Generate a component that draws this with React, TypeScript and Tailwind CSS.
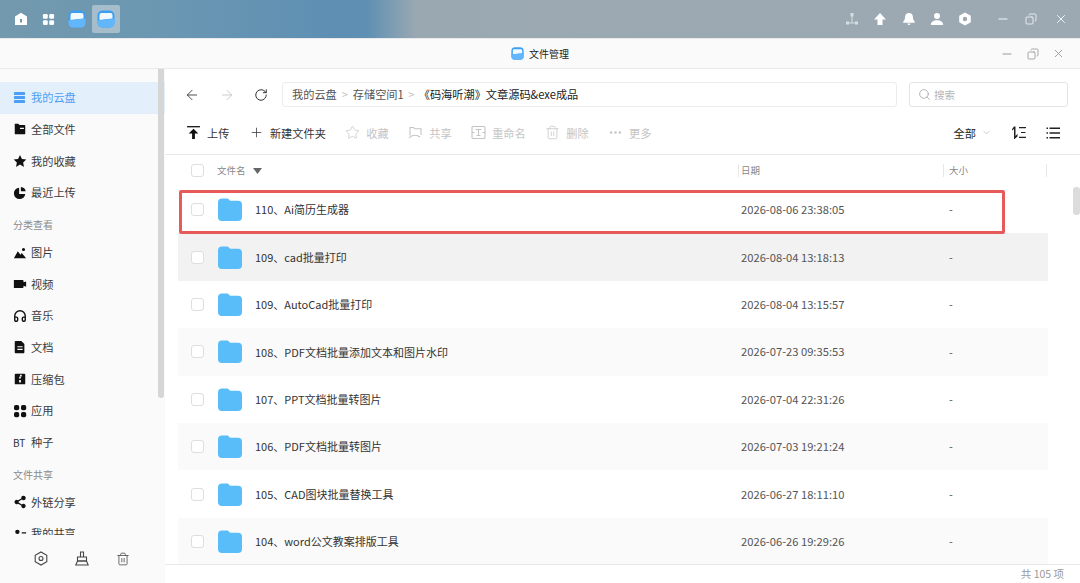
import React from "react";
import {
  ArrowLeft, ArrowRight, RotateCw, Search, Plus, Star, Trash2, Ellipsis, ChevronDown, Minus, X, Copy,
  Headphones,
} from "lucide-react";

const font = { fontFamily: '"Noto Sans CJK SC","Liberation Sans",sans-serif' };

function Dot({ d, size = 16, className = "" }: { d: string; size?: number; className?: string }) {
  return (
    <svg width={size} height={size} viewBox="0 0 16 16" className={className} fill="currentColor" fillRule="evenodd">
      <path d={d} />
    </svg>
  );
}

const ICONS: Record<string, React.ReactNode> = {
  cloud: (
    <svg width="13" height="13" viewBox="0 0 14 14" fill="#4d9ff5">
      <rect x="1" y="1" width="12" height="3.4" rx="1" />
      <rect x="1" y="5.3" width="12" height="3.4" rx="1" />
      <rect x="1" y="9.6" width="12" height="3.4" rx="1" />
    </svg>
  ),
  all: <Dot size={14} d="M2 2h4l1.500 1.500H13a1 1 0 0 1 1 1V13a1 1 0 0 1-1 1H3a1 1 0 0 1-1-1zM8 6.500v1.500h4.500V6.500z" />,
  star: <Dot size={14} d="M8 1l2.200 4.600 5 .7-3.600 3.500.9 5L8 12l-4.500 2.800.9-5L.8 6.300l5-.7z" />,
  recent: <Dot size={14} d="M7 2a6.500 6.500 0 1 0 7 7H7zM9 1v5h5.500A6 6 0 0 0 9 1z" />,
  image: <Dot size={14} d="M1 14l4.500-8 3 4 1.500-2 5 6zM12 2.200a1.800 1.800 0 1 1 0 3.600 1.800 1.800 0 0 1 0-3.600z" />,
  video: <Dot size={14} d="M1 3.500h10a1 1 0 0 1 1 1v1.500l3-1v6l-3-1v1.500a1 1 0 0 1-1 1H1z" />,
  music: <Headphones size={14} strokeWidth={2.4} />,
  doc: <Dot size={14} d="M3 1h6.500L13 4.500V14a1 1 0 0 1-1 1H3a1 1 0 0 1-1-1V2a1 1 0 0 1 1-1zM5 7v1.300h6V7zm0 3v1.300h6V10z" />,
  zip: <Dot size={14} d="M3 2h10a1 1 0 0 1 1 1v10a1 1 0 0 1-1 1H3a1 1 0 0 1-1-1V3a1 1 0 0 1 1-1zM8 3v2h2V3zM7 5.500v2h2v-2zM7 9v3h2V9z" />,
  app: (
    <svg width="14" height="14" viewBox="0 0 14 14" fill="currentColor">
      <rect x="1" y="1" width="5.200" height="5.200" rx="1.800" />
      <rect x="8" y="1" width="5.200" height="5.200" rx="1.800" />
      <rect x="1" y="8" width="5.200" height="5.200" rx="1.800" />
      <rect x="8" y="8" width="5.200" height="5.200" rx="1.800" />
    </svg>
  ),
  share: <Dot size={14} d="M12 1a2.500 2.500 0 1 1-1.800 4.200L6.400 7.300a2.500 2.500 0 0 1 0 1.400l3.800 2.100a2.500 2.500 0 1 1-.7 1.300L5.700 10a2.500 2.500 0 1 1 0-4l3.800-2.100A2.500 2.500 0 0 1 12 1z" />,
  mine: <Dot size={14} d="M5 3a2.500 2.500 0 1 1 0 5 2.500 2.500 0 0 1 0-5zM1 13c0-2.500 1.500-4 4-4s4 1.500 4 4zM10 6h5v1.300h-5zm0 3.500h5v1.300h-5z" />,
};

function NavItem({ icon, label, active, bt }: { icon?: string; label: string; active?: boolean; bt?: boolean }) {
  return (
    <div className={`flex h-[31.600px] items-center pl-[13px] text-[11.200px] ${active ? "bg-[#e4effc] text-[#4d9ff5]" : "text-[#3a3a3a]"}`}>
      <span className="flex w-[18px] shrink-0 items-center text-[#111]">
        {bt ? <span className="text-[10px] text-[#333]">BT</span> : icon ? ICONS[icon] : null}
      </span>
      <span>{label}</span>
    </div>
  );
}

function SectionLabel({ label }: { label: string }) {
  return <div className="flex h-[28.400px] items-center pl-[13px] pt-[4px] text-[10px] text-[#8a8a8a]">{label}</div>;
}

function Folder({ className = "" }: { className?: string }) {
  return (
    <svg width="24" height="23" viewBox="0 0 24 23" className={className}>
      <path d="M4 .5h5c1 0 1.500.5 2.200 1.500.4.6.8.8 1.500.8H20a4 4 0 0 1 4 4V19a4 4 0 0 1-4 4H4a4 4 0 0 1-4-4V4.500a4 4 0 0 1 4-4z" fill="#58bdf8" />
    </svg>
  );
}

function AppFolderIcon({ size = 18 }: { size?: number }) {
  return (
    <svg width={size} height={size} viewBox="0 0 18 18">
      <rect x="0.500" y="0.500" width="17" height="17" rx="5" fill="#3a9ff2" />
      <path d="M2.500 5a2 2 0 0 1 2-2h9a2 2 0 0 1 2 2v3.500L2.500 10z" fill="#f0f9ff" />
      <path d="M.5 10.500 17.500 8.500V13a4.500 4.500 0 0 1-4.500 4.500H5A4.500 4.500 0 0 1 .5 13z" fill="#62b6fb" />
    </svg>
  );
}

function CheckBox() {
  return <span className="block h-[13px] w-[13px] rounded-[3px] border border-[#dedede] bg-white" />;
}

const rows = [
  ["110、Ai简历生成器", "2026-08-06 23:38:05"],
  ["109、cad批量打印", "2026-08-04 13:18:13"],
  ["109、AutoCad批量打印", "2026-08-04 13:15:57"],
  ["108、PDF文档批量添加文本和图片水印", "2026-07-23 09:35:53"],
  ["107、PPT文档批量转图片", "2026-07-04 22:31:26"],
  ["106、PDF文档批量转图片", "2026-07-03 19:21:24"],
  ["105、CAD图块批量替换工具", "2026-06-27 18:11:10"],
  ["104、word公文教案排版工具", "2026-06-26 19:29:26"],
];

function ToolBtn({ icon, label, off }: { icon: React.ReactNode; label: string; off?: boolean }) {
  return (
    <div className={`flex items-center gap-[6px] text-[11.200px] ${off ? "text-[#c4c4c4]" : "text-[#333]"}`}>
      {icon}
      <span>{label}</span>
    </div>
  );
}

export default function App() {
  return (
    <div style={font} className="flex h-[583px] w-[1080px] flex-col overflow-hidden bg-white">
      {/* Desktop top bar */}
      <div className="flex h-[38px] shrink-0 items-center justify-between bg-[linear-gradient(90deg,#7399ad_0%,#6b97b2_15%,#5e8fb3_31%,#5f90b3_34%,#9aa8b2_38.500%,#9ca9b3_100%)] pl-[14px] pr-[12px]">
        <div className="flex items-center">
          <svg width="14" height="14" viewBox="0 0 14 14" className="mr-[14px]" fill="#fff" fillRule="evenodd">
            <path d="M7 .8 13 4.600V13H1V4.600zM6 7v3.500h2V7z" />
          </svg>
          <svg width="13" height="13" viewBox="0 0 14 14" className="mr-[13px]" fill="#fff">
            <rect x="1" y="1" width="5.200" height="5.200" rx="1.300" />
            <rect x="7.800" y="1" width="5.200" height="5.200" rx="1.300" />
            <rect x="1" y="7.800" width="5.200" height="5.200" rx="1.300" />
            <rect x="7.800" y="7.800" width="5.200" height="5.200" rx="1.300" />
          </svg>
          <span className="mr-[6px] flex"><AppFolderIcon /></span>
          <span className="flex h-[28px] w-[28px] items-center justify-center rounded-[2px] bg-[#a6bdcb]"><AppFolderIcon /></span>
        </div>
        <div className="flex items-center text-white">
          <svg width="14" height="14" viewBox="0 0 14 14" className="mr-[14px]" fill="#d5dde2">
            <rect x="5.500" y="1" width="3" height="3.500" />
            <rect x="1" y="9.500" width="3" height="3" />
            <rect x="10" y="9.500" width="3" height="3" />
            <path d="M6.500 4h1v6.500H10v1H4v-1h2.500z" />
          </svg>
          <svg width="14" height="14" viewBox="0 0 14 14" className="mr-[15px]" fill="#fff">
            <path d="M7 1 13 7.500H9.500V13h-5V7.500H1z" />
          </svg>
          <svg width="14" height="14" viewBox="0 0 14 14" className="mr-[14px]" fill="#fff">
            <path d="M7 1c2.800 0 4 2 4 4.500 0 2 .8 3 1.800 4.200v1H1.200v-1C2.200 8.500 3 7.500 3 5.500 3 3 4.200 1 7 1zM5.500 11.500h3a1.500 1.500 0 0 1-3 0z" />
          </svg>
          <svg width="14" height="14" viewBox="0 0 14 14" className="mr-[14px]" fill="#fff">
            <circle cx="7" cy="4" r="3" />
            <path d="M.8 13c0-3 2.500-4.800 6.200-4.800s6.200 1.800 6.200 4.800z" />
          </svg>
          <svg width="14" height="14" viewBox="0 0 14 14" className="mr-[24px]" fill="#fff" fillRule="evenodd">
            <path d="M7 .5 12.800 3.800v6.400L7 13.500 1.200 10.200V3.800zM7 4.800a2.200 2.200 0 1 0 0 4.400 2.200 2.200 0 0 0 0-4.400z" />
          </svg>
          <Minus size={14} strokeWidth={1.500} className="mr-[15px]" />
          <Copy size={12} strokeWidth={1.500} className="mr-[17px] -scale-x-100" />
          <X size={14} strokeWidth={1.500} />
        </div>
      </div>

      {/* Window title bar */}
      <div className="grid h-[31px] shrink-0 grid-cols-[1fr_auto_1fr] items-center border-y border-[#e9e9e9] bg-[#fafafa] pr-[15px] pl-[15px]">
        <div />
        <div className="flex items-center gap-[5px] text-[10px] text-[#222]">
          <AppFolderIcon size={13} />
          <span>文件管理</span>
        </div>
        <div className="flex items-center justify-end gap-[13px] text-[#8f8f8f]">
          <Minus size={14} strokeWidth={1.500} />
          <Copy size={12} strokeWidth={1.500} className="-scale-x-100" />
          <X size={13} strokeWidth={1.500} />
        </div>
      </div>

      {/* Body */}
      <div className="flex min-h-0 flex-1">
        {/* Sidebar */}
        <aside className="relative flex w-[165px] shrink-0 flex-col bg-[#fafafa]">
          <div className="min-h-0 flex-1 overflow-hidden pt-[13px]">
            <NavItem icon="cloud" label="我的云盘" active />
            <NavItem icon="all" label="全部文件" />
            <NavItem icon="star" label="我的收藏" />
            <NavItem icon="recent" label="最近上传" />
            <SectionLabel label="分类查看" />
            <NavItem icon="image" label="图片" />
            <NavItem icon="video" label="视频" />
            <NavItem icon="music" label="音乐" />
            <NavItem icon="doc" label="文档" />
            <NavItem icon="zip" label="压缩包" />
            <NavItem icon="app" label="应用" />
            <NavItem bt label="种子" />
            <SectionLabel label="文件共享" />
            <NavItem icon="share" label="外链分享" />
            <NavItem icon="mine" label="我的共享" />
          </div>
          <div className="flex h-[48px] shrink-0 items-center gap-[27px] bg-[#fafafa] pb-[1px] pl-[34px] text-[#444]">
            <svg width="14" height="15" viewBox="0 0 14 15" fill="none" stroke="currentColor" strokeWidth="1.100">
              <path d="M7 1 12.800 4.200v6.600L7 14 1.200 10.800V4.200z" />
              <circle cx="7" cy="7.500" r="2" />
            </svg>
            <svg width="14" height="15" viewBox="0 0 14 15" fill="none" stroke="currentColor" strokeWidth="1.100">
              <path d="M5.500 6V1h3v5" />
              <path d="M2.500 6h9v4h-9z" />
              <path d="M.8 14l1.700-4h9l1.700 4z" />
            </svg>
            <Trash2 size={14} strokeWidth={1.300} />
          </div>
          <div className="absolute right-[1px] top-0 h-[329px] w-[6px] rounded-b-[3px] bg-[#d6d6d6]" />
        </aside>

        {/* Main */}
        <main className="relative flex min-w-0 flex-1 flex-col">
          {/* Nav row */}
          <div className="flex h-[50px] shrink-0 items-center pl-[19px] pr-[12px] pt-[1px]">
            <ArrowLeft size={16} strokeWidth={1.300} className="mr-[19px] text-[#333]" />
            <ArrowRight size={16} strokeWidth={1.300} className="mr-[19px] text-[#c4c4c4]" />
            <RotateCw size={14} strokeWidth={1.700} className="mr-[14px] text-[#333]" />
            <div className="flex h-[25px] w-[615px] items-center rounded-[3px] border border-[#ececec] pl-[9px] text-[11.200px] text-[#555]">
              <span>我的云盘</span>
              <span className="w-[16px] text-center text-[#c4c4c4]">&gt;</span>
              <span>存储空间1</span>
              <span className="w-[15px] text-center text-[#c4c4c4]">&gt;</span>
              <span className="text-[#222]">《码海听潮》文章源码&amp;exe成品</span>
            </div>
            <div className="ml-[12px] flex h-[25px] flex-1 items-center gap-[3px] rounded-[3px] border border-[#e4e4e4] pl-[8px] text-[10.500px] text-[#b5b5b5]">
              <Search size={13} strokeWidth={1.300} className="text-[#999]" />
              <span>搜索</span>
            </div>
          </div>

          {/* Toolbar */}
          <div className="flex h-[36px] shrink-0 items-center justify-between border-b border-[#e8e8e8] pb-[7px] pl-[21px] pr-[20px]">
            <div className="flex items-center gap-[19.500px]">
              <ToolBtn label="上传" icon={
                <svg width="15" height="15" viewBox="0 0 14 14" fill="#111"><rect x="1" y="1" width="12" height="1.200" /><path d="M7 3.500 11.500 8H8.300v5H5.700V8H2.500z" /></svg>
              } />
              <ToolBtn label="新建文件夹" icon={<Plus size={15} strokeWidth={1.200} />} />
              <ToolBtn off label="收藏" icon={<Star size={15} strokeWidth={1.200} />} />
              <ToolBtn off label="共享" icon={
                <svg width="15" height="15" viewBox="0 0 15 14" fill="none" stroke="#c4c4c4" strokeWidth="1.100"><path d="M2 10V2h3.500l1 1.300H13v6.200" /><path d="M1 12.500c3-3.500 8-3.500 11-1" /></svg>
              } />
              <ToolBtn off label="重命名" icon={
                <svg width="15" height="15" viewBox="0 0 15 14" fill="none" stroke="#c4c4c4" strokeWidth="1.100"><rect x="1" y="1" width="13" height="12" rx="1" /><path d="M4.500 4h6M7.500 4v6M5.500 10h4M1 7h2.500M11.500 7H14" /></svg>
              } />
              <ToolBtn off label="删除" icon={<Trash2 size={15} strokeWidth={1.200} />} />
              <ToolBtn off label="更多" icon={<Ellipsis size={15} strokeWidth={2} />} />
            </div>
            <div className="flex items-center text-[#222]">
              <span className="text-[11.200px]">全部</span>
              <ChevronDown size={11} strokeWidth={1} className="ml-[5px] mr-[19px] text-[#999]" />
              <svg width="16" height="15" viewBox="0 0 16 14" fill="#222" className="mr-[19px]">
                <path d="M3 1h1.500v9.500L6.500 8.300V11L3.600 13.500H3z" />
                <path d="M1 3.800 3 1v2.500L1 5zM8 1.500h7v1.200H8zM10 6.400h4.500v1.200H10zM8 11.300h7v1.200H8z" />
              </svg>
              <svg width="14" height="14" viewBox="0 0 14 14" fill="#222">
                <path d="M.5 1.500h1.500V3H.5zM3.500 1.500H14V3H3.500zM.5 6.300h1.500v1.400H.5zM3.500 6.300H14v1.400H3.500zM.5 11h1.500v1.500H.5zM3.500 11H14v1.500H3.500z" />
              </svg>
            </div>
          </div>

          {/* Header */}
          <div className="flex h-[31px] shrink-0 items-center text-[9.500px] text-[#888]">
            <div className="flex w-[52px] justify-center pl-[13px]"><CheckBox /></div>
            <div className="flex w-[521px] items-center">
              <span>文件名</span>
              <svg width="9" height="6" viewBox="0 0 9 6" className="ml-[7px]" fill="#666"><path d="M0 0h9L4.500 6z" /></svg>
            </div>
            <div className="flex h-[13px] w-[205px] items-center border-l border-[#e8e8e8] pl-[2px]">日期</div>
            <div className="flex h-[13px] w-[104px] items-center border-x border-[#e8e8e8] pl-[5px]">大小</div>
          </div>

          {/* Rows */}
          <div className="min-h-0 flex-1 overflow-hidden pl-[13px]">
            {rows.map(([name, date], i) => (
              <div key={name} className={`flex h-[47.400px] w-[870px] items-center text-[11px] text-[#333] ${i === 1 ? "bg-[#f2f2f2]" : i % 2 === 1 ? "bg-[#fafafa]" : "bg-white"}`}>
                <div className="flex w-[39px] justify-center"><CheckBox /></div>
                <Folder className="ml-[1px]" />
                <span className="ml-[13px] w-[486px]">{name}</span>
                <span className="w-[208px] text-[11.200px] text-[#555]">{date}</span>
                <span className="text-[#555]">-</span>
              </div>
            ))}
          </div>

          {/* Footer */}
          <div className="flex h-[19px] shrink-0 items-center justify-end border-t border-[#e8e8e8] pr-[16px] text-[10.500px] text-[#999]">共 105 项</div>

          {/* Red annotation */}
          <div className="pointer-events-none absolute left-[14px] top-[121px] h-[44px] w-[826px] rounded-[2px] border-[3px] border-[#e75a5a]" />
          {/* Main scrollbar */}
          <div className="absolute right-0 top-[118px] h-[28px] w-[7px] rounded-[3px] bg-[#dcdcdc]" />
        </main>
      </div>
    </div>
  );
}
